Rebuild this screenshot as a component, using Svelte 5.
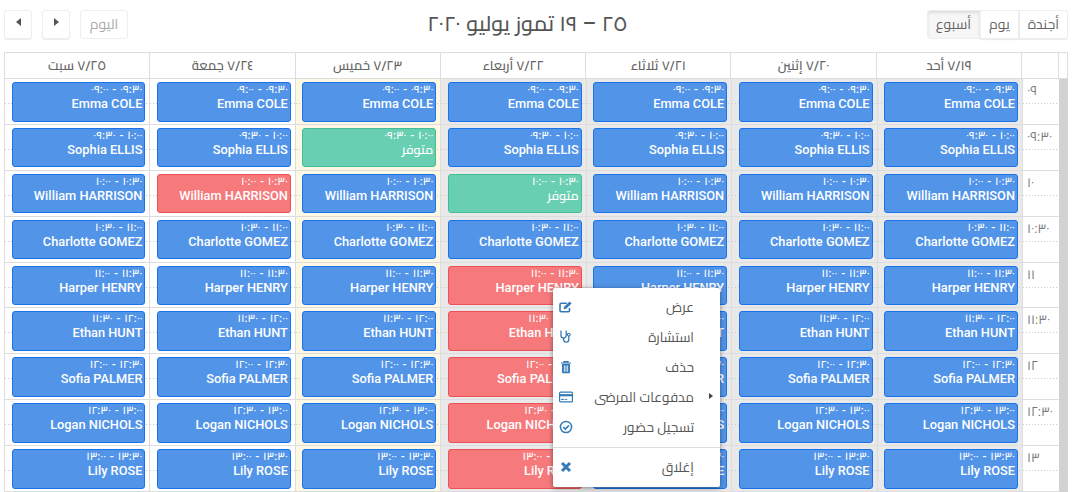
<script lang="ts">
	const ar = (s: string) => s.replace(/\d/g, (d) => '٠١٢٣٤٥٦٧٨٩'[+d])

	const days = [
		{ label: '7/19 أحد', kind: 'past' },
		{ label: '7/20 إثنين', kind: 'past' },
		{ label: '7/21 ثلاثاء', kind: 'past' },
		{ label: '7/22 أربعاء', kind: 'past' },
		{ label: '7/23 خميس', kind: 'today' },
		{ label: '7/24 جمعة', kind: '' },
		{ label: '7/25 سبت', kind: '' }
	]

	const slots = [
		{ axis: '09', start: '09:00', end: '09:30', name: 'Emma COLE' },
		{ axis: '09:30', start: '09:30', end: '10:00', name: 'Sophia ELLIS' },
		{ axis: '10', start: '10:00', end: '10:30', name: 'William HARRISON' },
		{ axis: '10:30', start: '10:30', end: '11:00', name: 'Charlotte GOMEZ' },
		{ axis: '11', start: '11:00', end: '11:30', name: 'Harper HENRY' },
		{ axis: '11:30', start: '11:30', end: '12:00', name: 'Ethan HUNT' },
		{ axis: '12', start: '12:00', end: '12:30', name: 'Sofia PALMER' },
		{ axis: '12:30', start: '12:30', end: '13:00', name: 'Logan NICHOLS' },
		{ axis: '13', start: '13:00', end: '13:30', name: 'Lily ROSE' }
	]

	// row:day -> status, everything else is a normal booking
	const status: Record<string, string> = {
		'1:4': 'free',
		'2:3': 'free',
		'2:5': 'cancelled',
		'4:3': 'cancelled',
		'5:3': 'cancelled',
		'6:3': 'cancelled',
		'7:3': 'cancelled',
		'8:3': 'cancelled'
	}
</script>

<div class="page" dir="rtl">
	<div class="toolbar">
		<div class="views">
			<button class="btn">أجندة</button>
			<button class="btn">يوم</button>
			<button class="btn active">أسبوع</button>
		</div>
		<h2 class="title">{ar('25 – 19')} تموز يوليو {ar('2020')}</h2>
		<div class="nav">
			<button class="btn today">اليوم</button>
			<button class="btn arrow" aria-label="next"><span class="tri right"></span></button>
			<button class="btn arrow" aria-label="prev"><span class="tri left"></span></button>
		</div>
	</div>

	<div class="calendar">
		<div class="head">
			<div class="head-cell"></div>
			<div class="head-cell"></div>
			{#each days as day}
				<div class="head-cell">{ar(day.label)}</div>
			{/each}
		</div>
		<div class="body">
			<div class="scrollbar"></div>
			<div class="grid">
				{#each slots as slot, r}
					<div class="axis">{ar(slot.axis)}</div>
					{#each days as day, d}
						<div class="cell {day.kind}">
							<div class="event {status[r + ':' + d] ?? ''}">
								<div class="time">{ar(slot.end + ' - ' + slot.start)}</div>
								<div class="name">{status[r + ':' + d] === 'free' ? 'متوفر' : slot.name}</div>
							</div>
						</div>
					{/each}
				{/each}
			</div>
		</div>
	</div>

	<div class="menu">
		<div class="item">
			<span>عرض</span>
			<svg class="icon" viewBox="0 0 14 12"><path d="M10.5 7v2.6a1.2 1.2 0 0 1-1.2 1.2H2.2A1.2 1.2 0 0 1 1 9.6V3.5a1.2 1.2 0 0 1 1.2-1.2h5.6" fill="none" stroke="currentColor" stroke-width="1.6"/><path d="M4.6 8.2l.5-2.4L10.6.4l2 2-5.5 5.4z" fill="currentColor"/></svg>
		</div>
		<div class="item">
			<span>استشارة</span>
			<svg class="icon" viewBox="0 0 14 14"><path d="M2.6 1.2H2v4.2a2.6 2.6 0 0 0 5.2 0V1.2h-.6M4.6 8v1.6a2.6 2.6 0 0 0 5.2 0V5.8" fill="none" stroke="currentColor" stroke-width="1.3"/><circle cx="9.8" cy="4.6" r="1.4" fill="none" stroke="currentColor" stroke-width="1.1"/></svg>
		</div>
		<div class="item">
			<span>حذف</span>
			<svg class="icon" viewBox="0 0 14 14"><path d="M2 3h10M5 3V1.6h4V3" fill="none" stroke="currentColor" stroke-width="1.2"/><path fill-rule="evenodd" d="M3 4h8v8.2a1 1 0 0 1-1 1H4a1 1 0 0 1-1-1zM4.9 5.4v6.4h.8V5.4zM6.6 5.4v6.4h.8V5.4zM8.3 5.4v6.4h.8V5.4z" fill="currentColor"/></svg>
		</div>
		<div class="item">
			<span>مدفوعات المرضى</span>
			<span class="caret"></span>
			<svg class="icon" viewBox="0 0 14 11"><rect x=".6" y=".6" width="12.8" height="9.8" rx="1" fill="none" stroke="currentColor" stroke-width="1.2"/><rect x="1" y="2.6" width="12" height="2.2" fill="currentColor"/><rect x="2" y="7.4" width="3.4" height="1" fill="currentColor"/><rect x="6.2" y="7.4" width="2" height="1" fill="currentColor"/></svg>
		</div>
		<div class="item">
			<span>تسجيل حضور</span>
			<svg class="icon" viewBox="0 0 14 14"><circle cx="7" cy="7" r="5.6" fill="none" stroke="currentColor" stroke-width="1.5"/><path d="M4.3 7l2 2 3.6-3.6" fill="none" stroke="currentColor" stroke-width="1.6"/></svg>
		</div>
		<div class="divider"></div>
		<div class="item">
			<span>إغلاق</span>
			<svg class="icon" viewBox="0 0 14 14"><path d="M3 3l8 8M11 3l-8 8" fill="none" stroke="currentColor" stroke-width="3"/></svg>
		</div>
	</div>
</div>

<style>
	:global(body) {
		margin: 0;
		background: #fff;
	}

	.page {
		position: relative;
		width: 1077px;
		height: 492px;
		overflow: hidden;
		font-family: Roboto, Cairo, 'DejaVu Sans', sans-serif;
		color: #555;
	}

	.toolbar {
		display: flex;
		justify-content: space-between;
		align-items: center;
		height: 30px;
		padding: 9px 9px 13px 4px;
	}

	.title {
		margin: 0;
		font-size: 21.4px;
		font-weight: 500;
		color: #555;
		line-height: 24px;
	}

	.views,
	.nav {
		display: flex;
	}

	.nav {
		gap: 10px;
	}

	.btn {
		height: 29px;
		padding: 0 10px;
		font: 14px/20px Roboto, Cairo, 'DejaVu Sans', sans-serif;
		color: #666;
		background: #fff;
		border: 1px solid #eee;
		border-radius: 3px;
		box-shadow: 0 1px 1px rgba(0, 0, 0, 0.08);
	}

	.views .btn {
		border-radius: 0;
		padding: 0 8px;
	}

	.views .btn:first-child {
		border-radius: 0 3px 3px 0;
	}

	.views .btn:last-child {
		border-radius: 3px 0 0 3px;
	}

	.btn.active {
		background: #f6f6f6;
		box-shadow: inset 0 2px 3px rgba(0, 0, 0, 0.1);
	}

	.btn.today {
		width: 48px;
		padding: 0;
		color: #aaa;
		box-shadow: none;
	}

	.btn.arrow {
		display: flex;
		align-items: center;
		justify-content: center;
		width: 28px;
		padding: 0 0 5px;
	}

	.tri {
		width: 0;
		height: 0;
		border-top: 4px solid transparent;
		border-bottom: 4px solid transparent;
	}

	.tri.left {
		border-right: 5px solid #555;
	}

	.tri.right {
		border-left: 5px solid #555;
	}

	.calendar {
		width: 1064px;
		margin-right: 9px;
	}

	.head {
		display: grid;
		grid-template-columns: 9px 37px repeat(7, 1fr);
		height: 27px;
		border: solid #ddd;
		border-width: 1px 1px 1px 0;
		box-sizing: border-box;
	}

	.head-cell {
		border-left: 1px solid #ddd;
		font-size: 13px;
		font-weight: 600;
		line-height: 25px;
		text-align: center;
		color: #666;
	}

	.body {
		display: flex;
	}

	.scrollbar {
		flex: 0 0 9px;
		height: 420px;
		background: #d2d2d2;
	}

	.grid {
		flex: 1;
		display: grid;
		grid-template-columns: 37px repeat(7, 1fr);
		grid-auto-rows: 45.875px;
	}

	.axis,
	.cell {
		box-sizing: border-box;
		border-bottom: 1px solid #ddd;
		border-left: 1px solid #ddd;
		background-image: linear-gradient(to right, #ccc 50%, transparent 50%);
		background-size: 3px 1px;
		background-position: 0 24px;
		background-repeat: repeat-x;
	}

	.axis {
		padding: 3px 0 0 4px;
		font-size: 13px;
		line-height: 18px;
		color: #777;
		text-align: left;
	}

	.cell {
		padding: 3px 4px 0 6.5px;
	}

	.cell.past {
		background-color: #e9e9e9;
	}

	.cell.today {
		background-color: #fcf8e3;
	}

	.event {
		box-sizing: border-box;
		height: 39.5px;
		padding: 1px 2px;
		color: #fff;
		background: #5294e8;
		border: 1px solid #1a73e8;
		border-radius: 3px;
		overflow: hidden;
	}

	.event.free {
		background: #69cfb2;
		border-color: #43bd97;
	}

	.event.cancelled {
		background: #f67a7c;
		border-color: #ee5058;
	}

	.time {
		font-size: 11px;
		font-weight: 600;
		line-height: 12px;
		word-spacing: 1px;
	}

	.name {
		font-size: 12.8px;
		font-weight: 500;
		line-height: 16px;
		white-space: nowrap;
	}

	.menu {
		position: absolute;
		left: 553px;
		top: 288px;
		width: 167px;
		height: 199px;
		box-sizing: border-box;
		padding-top: 4px;
		background: #fff;
		border-radius: 2px;
		box-shadow: 0 1px 5px rgba(0, 0, 0, 0.45);
		font-size: 13.5px;
		color: #555;
	}

	.item {
		display: flex;
		align-items: center;
		height: 30px;
		padding: 0 26px 0 6px;
		position: relative;
	}

	.icon {
		margin-right: auto;
		width: 14px;
		height: 14px;
		color: #337ab7;
	}

	.caret {
		position: absolute;
		right: 7px;
		top: 11px;
		border-top: 3px solid transparent;
		border-bottom: 3px solid transparent;
		border-left: 4px solid #444;
	}

	.divider {
		height: 1px;
		margin: 5px 0 4px;
		background: #ddd;
	}
</style>
